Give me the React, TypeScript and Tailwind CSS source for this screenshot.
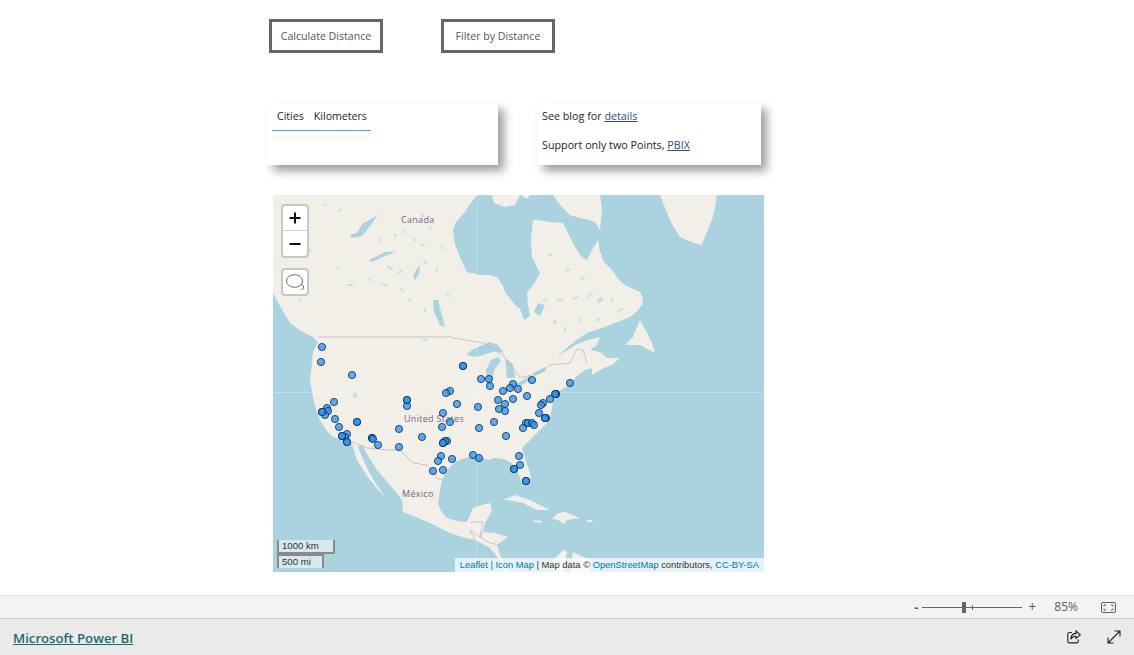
const MARKERS: [number, number][] = [
  [322, 347], [321, 362], [352, 375], [334, 402], [327, 408], [328, 411], [325, 415], [322, 412], [322, 412], [335, 419],
  [339, 427], [347, 434], [345, 437], [342, 436], [342, 436], [347, 442], [347, 442], [357, 422], [357, 422], [372, 438], [372, 438],
  [373, 439], [378, 445], [407, 406], [407, 400], [407, 400], [399, 429], [422, 437], [399, 447],
  [463, 366], [463, 366], [481, 379], [489, 379], [490, 386], [513, 384], [510, 388], [518, 389], [503, 391], [532, 380],
  [570, 383], [556, 394], [556, 394], [555, 394], [550, 399], [543, 403], [541, 405], [527, 396], [513, 399], [505, 404], [498, 400],
  [499, 409], [505, 411], [539, 413], [546, 418], [545, 418], [545, 418], [494, 422], [479, 428], [526, 423], [528, 423],
  [532, 423], [534, 425], [523, 428], [506, 436], [450, 391], [446, 393], [457, 404], [478, 407], [443, 413], [450, 422],
  [442, 427], [447, 441], [445, 441], [443, 443], [443, 443], [441, 456], [438, 461], [452, 459], [473, 455], [479, 458],
  [433, 471], [443, 470], [519, 456], [520, 465], [514, 469], [514, 469], [526, 481], [526, 481],
];

const LAND = [
  '273,195 477,195 470,204 465,212 456,222 453,230 455,245 458,252 460,257 464,266 467,272 480,275 490,275 497,277 503,286 505,292 515,305 520,309 524,320 530,316 528,305 527,293 534,284 540,273 536,265 532,257 531,240 533,220 537,220 550,222 563,223 569,235 575,247 581,256 587,260 592,250 598,240 600,252 604,262 612,270 619,280 625,285 633,289 640,292 643,298 642,305 636,312 630,317 620,321 610,325 598,329 587,333 578,339 570,345 558,356 566,351 575,345 588,340 600,337 597,345 590,350 600,352 607,358 620,358 612,365 602,369 592,375 592,368 585,370 575,378 570,385 564,388 558,392 553,400 552,409 550,417 546,424 540,430 531,439 522,448 524,455 526,462 529,470 531,478 527,484 522,483 519,475 516,468 510,462 503,459 495,458 488,460 480,457 472,456 465,458 455,462 449,468 445,473 442,480 440,490 438,503 441,511 447,518 457,521 467,522 470,515 473,508 482,505 490,503 492,510 489,516 485,523 483,532 495,533 508,537 497,545 500,555 507,570 515,572 505,572 500,560 490,548 475,540 462,537 450,533 440,528 430,523 416,517 403,512 402,500 390,485 377,470 368,456 362,445 358,447 363,459 368,470 376,484 385,497 378,490 367,476 357,460 352,443 342,440 333,437 326,430 320,420 316,409 313,397 310,380 312,363 313,352 318,342 313,337 301,331 290,323 281,308 273,293',
  '553,195 600,195 602,208 600,230 595,222 590,220 580,218 570,215 560,205',
  '660,195 717,195 715,208 712,220 706,234 702,245 694,243 680,237 673,226 667,213',
  '640,320 633,337 625,345 640,345 655,353 652,343 647,333',
  '492,195 520,195 515,205 505,207 494,203',
  '521,195 530,195 527,199',
  '503,500 515,495 530,500 550,510 537,510 523,503 508,500',
  '552,519 558,513 565,512 580,518 567,520 564,524 558,520',
  '533,520 543,521 540,523 535,522',
  '587,520 593,520 592,522 587,522',
  '553,560 563,550 567,552 564,572 553,572',
  '573,552 590,560 590,572 570,572',
];

const LAKES = [
  '466,355 472,350 480,346 490,342 498,345 504,353 496,351 486,354 476,357',
  '498,357 491,360 486,370 487,383 492,380 495,369 501,361',
  '505,358 513,364 515,378 507,378 506,368',
  '516,384 530,376 531,379 519,387',
  '532,374 545,367 546,371 535,376',
  '350,235 357,233 362,224 378,215 370,226 362,236 352,238',
  '369,260 385,252 396,252 385,256 372,262',
  '433,300 438,300 445,327 440,325 434,312',
  '413,277 416,270 420,265 419,274 415,280',
  '534,312 540,316 545,305 538,303',
];

// x, y, rx, ry, rotation for the small lakes scattered over Canada and Quebec
const DOTS: [number, number, number, number, number][] = [
  [340, 210, 3, 1, -30], [325, 205, 2, 1, 20], [390, 268, 4, 1, 30], [400, 272, 3, 1, -40], [385, 285, 4, 1, 10],
  [402, 290, 3, 1, 40], [425, 262, 3, 1, 50], [437, 270, 2, 1, -50], [350, 285, 4, 1, 0], [310, 250, 3, 1, 40],
  [422, 245, 3, 1, 30], [415, 240, 2, 1, 60], [560, 300, 4, 1, -20], [545, 300, 3, 1, -30], [575, 298, 4, 1, -25],
  [600, 300, 4, 2, -40], [580, 320, 3, 1, -50], [555, 322, 2, 2, 0], [568, 270, 3, 1, -30], [583, 278, 3, 1, -30],
  [590, 295, 4, 1, -40], [425, 340, 3, 1, 10], [355, 395, 2, 3, 0], [338, 268, 2, 1, 30], [422, 215, 3, 1, 45],
  [405, 232, 2, 1, 45], [380, 240, 2, 1, 20], [395, 235, 2, 1, 50], [430, 228, 2, 1, 60], [442, 248, 2, 1, 60],
  [370, 280, 2, 1, 30], [410, 300, 3, 1, 50], [425, 310, 2, 1, 70], [448, 295, 2, 1, 30], [300, 300, 3, 1, 45],
  [620, 310, 4, 1, -30], [598, 320, 3, 1, -45], [612, 300, 3, 1, -50], [550, 255, 2, 1, -20], [565, 330, 3, 1, -60],
];

const BORDERS = [
  '318,337 452,337 453,338 483,343 503,355 512,367 520,378 535,374 540,373 550,365 570,363 577,349 583,350 587,363',
  '352,442 367,448 388,450 400,450 413,463 427,465 437,478 442,480',
  '470,522 483,522 480,537 470,530 475,540',
  '483,532 480,537 490,543 500,545',
];

function UsaMap() {
  return (
    <svg viewBox="273 195 491 377" className="block h-full w-full bg-[#aad3df]">
      <g className="blur-[0.6px]">
        {LAND.map((p) => <polygon key={p} points={p} fill="#f2efe9" />)}
        {LAKES.map((p) => <polygon key={p} points={p} fill="#aad3df" />)}
        {DOTS.map(([x, y, rx, ry, r]) => (
          <ellipse key={`${x}-${y}`} cx={x} cy={y} rx={rx} ry={ry} fill="#c6dfe5" transform={`rotate(${r} ${x} ${y})`} />
        ))}
      </g>
      <g fill="none" stroke="#c4b2c3" strokeWidth="0.8">
        {BORDERS.map((p) => <polyline key={p} points={p} />)}
      </g>
      <path d="M477 195V572M273 392.5H764" stroke="#ffffff" strokeOpacity="0.28" strokeWidth="1" />
      <g fontFamily="'Open Sans', sans-serif" fontSize="9" fill="#7a5f85" letterSpacing="0.3">
        <text x="401" y="223">Canada</text>
        <text x="404" y="422">United States</text>
        <text x="402" y="497">México</text>
      </g>
      {MARKERS.map(([x, y], i) => (
        <circle key={i} cx={x} cy={y} r="3.6" fill="#2a93f5" fillOpacity="0.76" stroke="#0c2a47" strokeOpacity="0.8" strokeWidth="1" />
      ))}
    </svg>
  );
}

function ActionButton({ label }: { label: string }) {
  return (
    <div className="flex h-[34px] w-[114px] items-center justify-center border-[3px] border-[#666666] bg-white pt-[1px] text-[10.6px] text-[#555555]">
      {label}
    </div>
  );
}

export default function App() {
  return (
    <div className="flex h-[655px] w-[1134px] flex-col overflow-hidden bg-white font-['Open_Sans',sans-serif]">
      <div className="flex-1 pl-[267px]">
        <div className="mt-[19px] flex gap-[58px] pl-[2px]">
          <ActionButton label="Calculate Distance" />
          <ActionButton label="Filter by Distance" />
        </div>

        <div className="mt-[50px] flex gap-[39px]">
          <div className="h-[62px] w-[231px] bg-white pl-[5px] pt-[6px] text-[10.6px] text-[#252423] shadow-[6px_6px_9px_rgba(0,0,0,0.38)]">
            <div className="flex h-[22px] w-[99px] gap-[10px] border-b border-[#49a3f7] pl-[5px]">
              <span>Cities</span>
              <span>Kilometers</span>
            </div>
          </div>
          <div className="h-[62px] w-[224px] bg-white pl-[5px] pt-[5px] text-[10.75px] text-[#252423] shadow-[6px_6px_9px_rgba(0,0,0,0.38)]">
            <p>See blog for <span className="text-[#2b4a8c] underline">details</span></p>
            <p className="mt-[13px]">Support only two Points, <span className="text-[#2b4a8c] underline">PBIX</span></p>
          </div>
        </div>

        <div className="relative ml-[6px] mt-[30px] h-[377px] w-[491px]">
          <UsaMap />

          <div className="absolute left-[8px] top-[9px] w-[28px] overflow-hidden rounded-[4px] border-2 border-[#c9c7c2] bg-white text-[#111111]">
            <div className="flex h-[25px] items-center justify-center border-b border-[#cccccc]">
              <svg width="12" height="12" viewBox="0 0 12 12"><path d="M6 0.5V11.5M0.5 6H11.5" stroke="#111" strokeWidth="2" /></svg>
            </div>
            <div className="flex h-[25px] items-center justify-center">
              <svg width="12" height="12" viewBox="0 0 12 12"><path d="M0.5 6H11.5" stroke="#111" strokeWidth="2" /></svg>
            </div>
          </div>

          <div className="absolute left-[8px] top-[73px] flex h-[28px] w-[28px] items-center justify-center rounded-[4px] border-2 border-[#c9c7c2] bg-white">
            <svg width="21" height="19" viewBox="0 0 21 19" fill="none" stroke="#444" strokeWidth="0.8">
              <ellipse cx="9.5" cy="8" rx="8" ry="6.3" />
              <path d="M16 11C18 12 19 13.5 18.5 15.5C18 16.5 17 16.5 16 16" />
            </svg>
          </div>

          <div className="absolute bottom-[4px] left-[4px] flex flex-col items-start font-['Liberation_Sans',sans-serif] text-[9.6px] leading-[12px] text-[#333333]">
            <div className="h-[14px] w-[58px] border-2 border-t-0 border-[#8a8a8a] bg-white/50 pl-[3px]">1000 km</div>
            <div className="h-[14px] w-[47px] border-2 border-b-0 border-[#8a8a8a] bg-white/50 pl-[3px]">500 mi</div>
          </div>

          <div className="absolute bottom-0 right-0 flex h-[14px] items-center whitespace-pre bg-white/70 px-[5px] font-['Liberation_Sans',sans-serif] text-[9.35px] text-[#333333]">
            <span className="text-[#0078a8]">Leaflet</span>
            <span className="text-[#0078a8]"> | Icon Map</span>
            <span> | Map data © </span>
            <span className="text-[#0078a8]">OpenStreetMap</span>
            <span> contributors, </span>
            <span className="text-[#0078a8]">CC-BY-SA</span>
          </div>
        </div>
      </div>

      <div className="flex h-[23px] items-center justify-end border-t border-[#e1e1e1] bg-[#f3f3f3] pr-[18px] text-[#605e5c]">
        <span className="mr-[4px] text-[13px] font-bold leading-none">-</span>
        <div className="relative h-px w-[100px] bg-[#666666]">
          <div className="absolute left-[40px] top-[-5px] h-[11px] w-[4px] bg-[#666666]" />
          <div className="absolute left-[50px] top-[-2px] h-[5px] w-px bg-[#666666]" />
        </div>
        <span className="ml-[6px] text-[14px] leading-none">+</span>
        <span className="ml-[18px] text-[12px] leading-none">85%</span>
        <svg className="ml-[23px]" width="15" height="11" viewBox="0 0 15 11" fill="none" stroke="#605e5c" strokeWidth="1">
          <rect x="0.5" y="0.5" width="14" height="10" rx="1.5" />
          <path d="M3 4.5V3H5M10 3H12V4.5M12 6.5V8H10M5 8H3V6.5" />
        </svg>
      </div>

      <div className="flex h-[37px] items-center justify-between border-t border-[#c8c8c8] bg-[#eaeaea] pl-[13px] pr-[13px]">
        <span className="pt-[3px] text-[13.2px] font-semibold text-[#1b6a70] underline">Microsoft Power BI</span>
        <div className="flex items-center gap-[26px]">
          <svg width="14" height="14" viewBox="0 0 14 14" fill="none" stroke="#2a1a2e" strokeWidth="1.1">
            <path d="M5 2.5H2.5C1.4 2.5 0.8 3.2 0.8 4.2V11.2C0.8 12.2 1.4 12.9 2.5 12.9H9.5C10.5 12.9 11.2 12.2 11.2 11.2V9.5" />
            <path d="M9 1L13.3 4.8L9 8.4V6.2C6.4 6.2 4.8 7.2 3.8 9.2C3.8 6 5.6 3.6 9 3.4Z" />
          </svg>
          <svg width="14" height="14" viewBox="0 0 14 14" fill="none" stroke="#2a1a2e" strokeWidth="1.1">
            <path d="M13 1L1 13M7.5 1H13V6.5M1 7.5V13H6.5" />
          </svg>
        </div>
      </div>
    </div>
  );
}
